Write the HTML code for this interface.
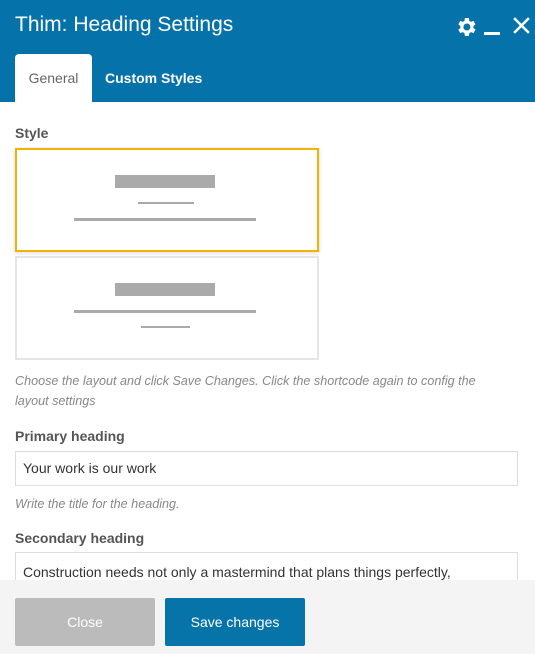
<!DOCTYPE html>
<html><head><style>
*{box-sizing:border-box;margin:0;padding:0}
body{width:535px;height:654px;overflow:hidden;font-family:"Liberation Sans",sans-serif;background:#fff;position:relative;color:#555}
.hd{position:absolute;left:0;top:0;width:535px;height:102px;background:#0573aa}
.title{position:absolute;left:15px;top:13px;font-size:21px;color:#fff}
.tab{position:absolute;left:15px;top:54px;width:77px;height:48px;background:#fff;border-radius:4px 4px 0 0;font-size:14px;color:#666;text-align:center;line-height:48px}
.tab2{position:absolute;left:105px;top:54px;height:48px;line-height:48px;font-size:14px;color:#fff;font-weight:bold}
.lbl{position:absolute;left:15px;font-size:14px;color:#555;font-weight:bold}
.box{position:absolute;left:15px;width:304px;height:104px;border:2px solid #e5e5e5;background:#fff}
.bar{position:absolute;background:#aaa}
.hint{position:absolute;left:15px;font-size:12.6px;font-style:italic;color:#888;line-height:20px}
.inp{position:absolute;left:15px;width:503px;border:1px solid #ddd;font-size:14px;color:#333;padding:0 7px}
.ft{position:absolute;left:0;top:580px;width:535px;height:74px;background:#f4f4f4}
.btn{position:absolute;top:598px;width:140px;height:48px;border-radius:2px;color:#fff;font-size:14px;text-align:center;line-height:48px}
</style></head><body>
<div class="hd">
<div class="title">Thim: Heading Settings</div>
<svg style="position:absolute;left:454px;top:15px" width="24" height="24" viewBox="0 0 24 24"><path fill="#fff" fill-rule="evenodd" d="M19.4 13a7.5 7.5 0 0 0 0-2l2.1-1.6-2-3.5-2.5 1a7 7 0 0 0-1.7-1L14.9 3h-4l-.4 2.9a7 7 0 0 0-1.7 1l-2.5-1-2 3.5L6.4 11a7.5 7.5 0 0 0 0 2l-2.1 1.6 2 3.5 2.5-1a7 7 0 0 0 1.7 1l.4 2.9h4l.4-2.9a7 7 0 0 0 1.7-1l2.5 1 2-3.5zM12.9 15.5a3.5 3.5 0 1 1 0-7 3.5 3.5 0 0 1 0 7z"/></svg>
<div style="position:absolute;left:484px;top:32px;width:16px;height:3px;background:#fff"></div>
<svg style="position:absolute;left:512px;top:16px" width="19" height="19" viewBox="0 0 18 18"><path d="M2 2L16 16M16 2L2 16" stroke="#fff" stroke-width="2.4"/></svg>
<div class="tab">General</div>
<div class="tab2">Custom Styles</div>
</div>
<div class="lbl" style="top:125px">Style</div>
<div class="box" style="top:148px;border-color:#f0b400;box-shadow:0 1px 4px rgba(0,0,0,.15)">
<div class="bar" style="left:98px;top:25px;width:100px;height:13px"></div>
<div class="bar" style="left:121px;top:52px;width:56px;height:2px"></div>
<div class="bar" style="left:57px;top:68px;width:182px;height:3px"></div>
</div>
<div class="box" style="top:256px">
<div class="bar" style="left:98px;top:25px;width:100px;height:13px"></div>
<div class="bar" style="left:57px;top:52px;width:182px;height:3px"></div>
<div class="bar" style="left:124px;top:68px;width:49px;height:2px"></div>
</div>
<div class="hint" style="top:371px;width:505px">Choose the layout and click Save Changes. Click the shortcode again to config the<br>layout settings</div>
<div class="lbl" style="top:428px">Primary heading</div>
<div class="inp" style="top:451px;height:35px;line-height:33px">Your work is our work</div>
<div class="hint" style="top:494px">Write the title for the heading.</div>
<div class="lbl" style="top:530px">Secondary heading</div>
<div class="inp" style="top:552px;height:40px;padding-top:9px;line-height:20px">Construction needs not only a mastermind that plans things perfectly,</div>
<div class="ft"></div>
<div class="btn" style="left:15px;background:#bbb">Close</div>
<div class="btn" style="left:165px;background:#0673a9">Save changes</div>
</body></html>
